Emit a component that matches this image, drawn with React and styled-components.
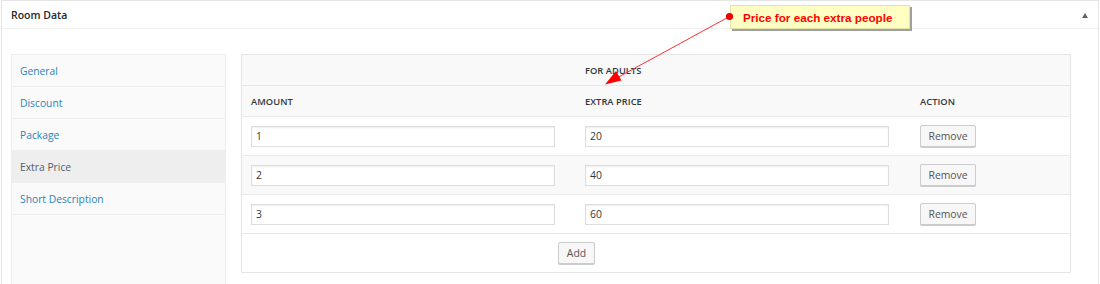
import React from "react";
import styled, { createGlobalStyle } from "styled-components";

const Global = createGlobalStyle`
  html, body { margin: 0; padding: 0; background: #fff; }
  body { font-family: "Open Sans", "Noto Sans", sans-serif; color: #32373c; }
  * { box-sizing: border-box; }
`;

const Page = styled.div`
  position: relative;
  width: 1100px;
  height: 284px;
  overflow: hidden;
`;

const Panel = styled.div`
  margin-left: 1px;
  width: 1098px;
  height: 320px;
  border: 1px solid #e5e5e5;
  border-bottom: none;
  background: #fff;
`;

const Header = styled.div`
  height: 28px;
  border-bottom: 1px solid #eeeeee;
  display: flex;
  align-items: center;
  justify-content: space-between;
  padding: 0 10px 0 9px;
`;

const Title = styled.h2`
  margin: 0;
  font-size: 10.5px;
  font-weight: 600;
  color: #23282d;
`;

const Toggle = styled.span`
  width: 0;
  height: 0;
  border-left: 3.5px solid transparent;
  border-right: 3.5px solid transparent;
  border-bottom: 5px solid #5b6670;
  margin-top: 1px;
`;

const Body = styled.div`
  display: flex;
  align-items: flex-start;
  gap: 15px;
  padding: 25px 0 0 9px;
`;

const Tabs = styled.ul`
  list-style: none;
  margin: 0;
  padding: 0;
  width: 215px;
  height: 260px;
  background: #fafafa;
  border: 1px solid #eeeeee;
  flex: none;
`;

const Tab = styled.li`
  height: 32px;
  border-bottom: 1px solid #eeeeee;
  display: flex;
  align-items: center;
  padding-left: 8px;
  font-size: 10.3px;
  color: ${(p) => (p.$active ? "#555d66" : "#2b82b9")};
  background: ${(p) => (p.$active ? "#eeeeee" : "transparent")};
`;

const Table = styled.div`
  width: 830px;
  border: 1px solid #e5e5e5;
  flex: none;
`;

const Row = styled.div`
  display: grid;
  grid-template-columns: 334px 335px 1fr;
  align-items: center;
  height: ${(p) => p.$h}px;
  background: ${(p) => p.$bg || "#fff"};
  border-bottom: ${(p) => (p.$last ? "none" : "1px solid #e8e8e8")};
`;

const Cell = styled.div`
  padding-left: ${(p) => (p.$center ? 0 : 9)}px;
  display: flex;
  align-items: center;
  justify-content: ${(p) => (p.$center ? "center" : "flex-start")};
  grid-column: ${(p) => p.$span || "auto"};
`;

const Th = styled(Cell)`
  font-size: 9.3px;
  font-weight: 600;
  color: #32373c;
  letter-spacing: 0.05px;
`;

const Input = styled.input`
  width: 304px;
  height: 21px;
  border: 1px solid #dddddd;
  box-shadow: inset 0 1px 2px rgba(0, 0, 0, 0.07);
  background: #fff;
  padding: 0 4px;
  font-family: "Open Sans", sans-serif;
  font-size: 10.4px;
  color: #32373c;
  outline: none;
`;

const Button = styled.button`
  height: 22px;
  padding: 0 ${(p) => p.$px || 8}px;
  border: 1px solid #cccccc;
  border-radius: 2px;
  background: #f7f7f7;
  box-shadow: 0 1px 0 #cccccc;
  font-family: "Open Sans", sans-serif;
  font-size: 10.4px;
  color: #555555;
  cursor: pointer;
`;

const Callout = styled.div`
  position: absolute;
  left: 730px;
  top: 5px;
  width: 180px;
  height: 24px;
  background: #ffffc4;
  border: 1px solid #e4e4a8;
  box-shadow: 2px 2px 0 #a0a0a0;
  display: flex;
  align-items: center;
  padding-left: 12px;
  font-family: "Liberation Sans", Arial, sans-serif;
  font-weight: bold;
  font-size: 11.7px;
  color: #ff0000;
`;

const Arrow = styled.svg`
  position: absolute;
  left: 0;
  top: 0;
  pointer-events: none;
`;

const rows = [
  { a: "1", p: "20" },
  { a: "2", p: "40", bg: "#f9f9f9" },
  { a: "3", p: "60" },
];

export default function App() {
  return (
    <>
      <Global />
      <Page>
        <Panel>
          <Header>
            <Title>Room Data</Title>
            <Toggle />
          </Header>
          <Body>
            <Tabs>
              <Tab>General</Tab>
              <Tab>Discount</Tab>
              <Tab>Package</Tab>
              <Tab $active>Extra Price</Tab>
              <Tab>Short Description</Tab>
            </Tabs>
            <Table>
              <Row $h={31} $bg="#f9f9f9">
                <Th $span="2">FOR ADULTS</Th>
              </Row>
              <Row $h={31} $bg="#f9f9f9">
                <Th>AMOUNT</Th>
                <Th>EXTRA PRICE</Th>
                <Th>ACTION</Th>
              </Row>
              {rows.map((r) => (
                <Row key={r.a} $h={39} $bg={r.bg}>
                  <Cell>
                    <Input defaultValue={r.a} />
                  </Cell>
                  <Cell>
                    <Input defaultValue={r.p} />
                  </Cell>
                  <Cell>
                    <Button $px={7.5}>Remove</Button>
                  </Cell>
                </Row>
              ))}
              <Row $h={38} $last>
                <Cell $span="1 / 3" $center>
                  <Button $px={8}>Add</Button>
                </Cell>
              </Row>
            </Table>
          </Body>
        </Panel>
        <Callout>Price for each extra people</Callout>
        <Arrow width="1100" height="284" viewBox="0 0 1100 284">
          <line x1="729.5" y1="16.5" x2="614" y2="79.5" stroke="#ff3030" strokeWidth="1" />
          <polygon points="605,84.5 621.5,80.5 616,71" fill="#ff0000" />
          <circle cx="729.5" cy="16.5" r="3.6" fill="#ee0000" />
        </Arrow>
      </Page>
    </>
  );
}
